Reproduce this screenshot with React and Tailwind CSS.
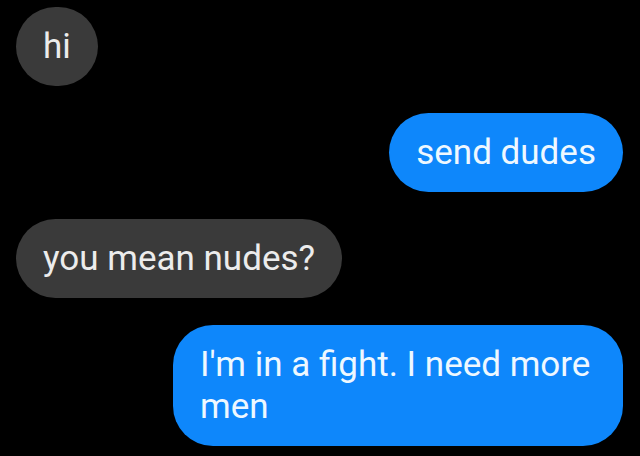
const messages = [
  { id: 1, from: "them", text: "hi" },
  { id: 2, from: "me", text: "send dudes" },
  { id: 3, from: "them", text: "you mean nudes?" },
  { id: 4, from: "me", text: "I'm in a fight. I need more men" },
];

function Bubble({ from, text }) {
  const mine = from === "me";
  return (
    <div className={mine ? "flex justify-end" : "flex justify-start"}>
      <div
        className={
          mine
            ? "max-w-[450px] rounded-[40px] bg-[#0e87fb] px-[27px] pt-[19px] pb-[18px] text-[#eef8ff]"
            : "max-w-[450px] rounded-[40px] bg-[#3a3a3a] px-[27px] pt-[19px] pb-[18px] text-[#ececec]"
        }
      >
        {text}
      </div>
    </div>
  );
}

export default function App() {
  return (
    <div className="min-h-screen w-[640px] bg-black pl-4 pr-[17px] pt-[7px] font-['Roboto',sans-serif] text-[35px] leading-[42px]">
      <div className="flex flex-col gap-[27px]">
        {messages.map((m) => (
          <Bubble key={m.id} from={m.from} text={m.text} />
        ))}
      </div>
    </div>
  );
}
